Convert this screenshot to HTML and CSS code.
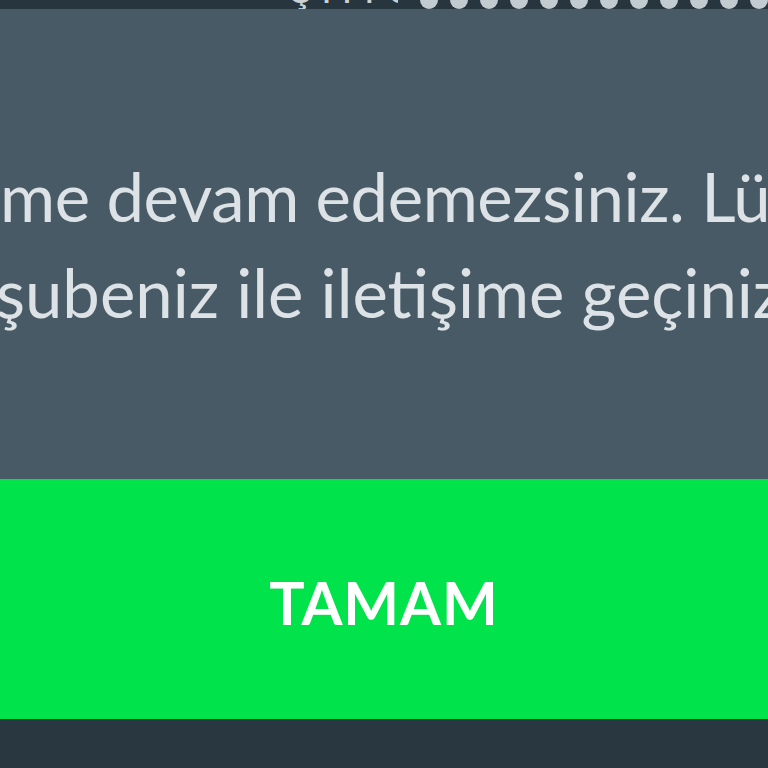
FILE: index.html
```html
<!DOCTYPE html>
<html lang="tr">
<head>
<meta charset="utf-8">
<link rel="stylesheet" href="styles.css">
</head>
<body>
<div class="screen">
  <div class="top">
    <div class="top-text">
      <span class="label">Şifre</span>
      <span class="mask"><i class="dot"></i><i class="dot"></i><i class="dot"></i><i class="dot"></i><i class="dot"></i><i class="dot"></i><i class="dot"></i><i class="dot"></i><i class="dot"></i><i class="dot"></i><i class="dot"></i><i class="dot"></i></span>
    </div>
  </div>
  <div class="panel">
    <div class="line line1">me devam edemezsiniz. Lütfen</div>
    <div class="line line2">şubeniz ile iletişime geçiniz.</div>
  </div>
  <div class="btn"><span class="btn-text">TAMAM</span></div>
  <div class="bottom"></div>
</div>
</body>
</html>
```
FILE: styles.css
```css
html, body {
  margin: 0;
  padding: 0;
  background: #283740;
}
.screen {
  width: 768px;
  height: 768px;
  overflow: hidden;
  display: flex;
  flex-direction: column;
  font-family: Lato, "Open Sans", sans-serif;
}
.top {
  height: 9px;
  flex: none;
  background: #26353e;
  overflow: hidden;
}
.top-text {
  margin-top: -34px;
  height: 43px;
  padding-left: 290px;
  white-space: nowrap;
  color: #c9d1d5;
  font-size: 42px;
  line-height: 43px;
  display: flex;
  align-items: flex-end;
  gap: 22px;
}
.label {
  display: block;
  width: 131px;
  letter-spacing: 9px;
  overflow: hidden;
}
.mask {
  display: flex;
  gap: 12px;
  align-items: flex-end;
}
.dot {
  display: block;
  width: 18px;
  height: 18px;
  border-radius: 50%;
  background: #c2cbd0;
}
.panel {
  flex: none;
  height: 470px;
  box-sizing: border-box;
  padding-top: 139px;
  background: #475a65;
  color: #dce2e6;
  overflow: hidden;
}
.line {
  white-space: nowrap;
  font-size: 67px;
  line-height: 96px;
  font-weight: 400;
}
.line1 { margin-left: 0; letter-spacing: -0.4px; }
.line2 { margin-left: -4px; }
.btn {
  flex: none;
  height: 240px;
  background: #01e34a;
  display: flex;
  align-items: center;
  justify-content: center;
}
.btn-text {
  color: #ffffff;
  font-weight: 700;
  font-size: 59px;
  letter-spacing: 1px;
  padding-top: 6px;
}
.bottom {
  flex: 1;
  background: #283740;
}
```
